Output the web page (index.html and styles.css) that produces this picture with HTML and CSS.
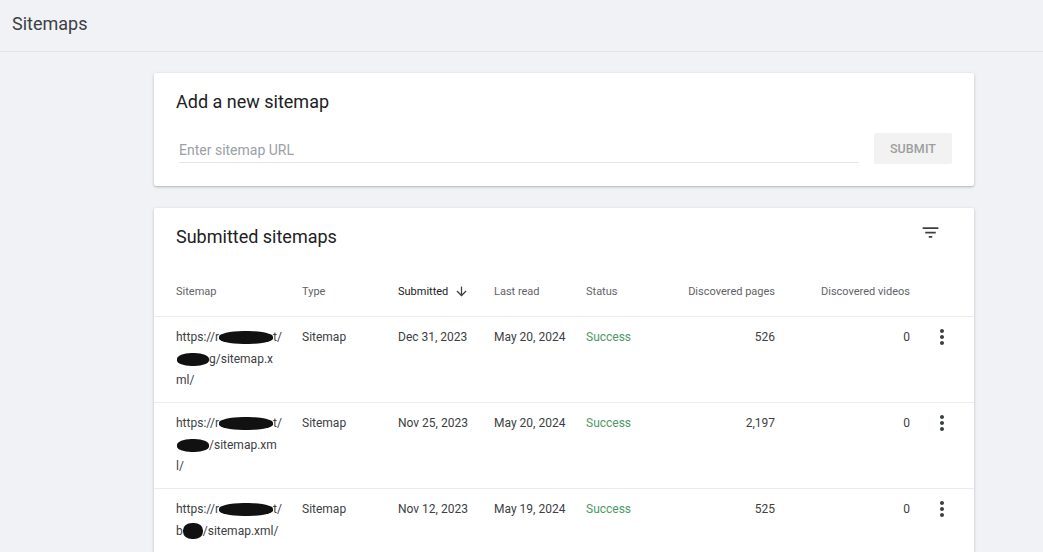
FILE: index.html
```html
<!DOCTYPE html>
<html lang="en">
<head>
<meta charset="utf-8">
<title>Sitemaps</title>
<link rel="stylesheet" href="styles.css">
</head>
<body>
<header class="topbar">
  <h1 class="page-title">Sitemaps</h1>
</header>
<main class="content">
  <section class="card add-card">
    <h2 class="card-title">Add a new sitemap</h2>
    <div class="add-row">
      <div class="url-field"><span class="placeholder">Enter sitemap URL</span></div>
      <button class="submit-btn" type="button">SUBMIT</button>
    </div>
  </section>

  <section class="card list-card">
    <div class="list-head">
      <h2 class="card-title">Submitted sitemaps</h2>
      <svg class="filter-icon" viewBox="0 0 24 24" width="21" height="21"><path d="M10 18h4v-2h-4v2zM3 6v2h18V6H3zm3 7h12v-2H6v2z"/></svg>
    </div>
    <div class="grid-row head-row">
      <div class="th">Sitemap</div>
      <div class="th">Type</div>
      <div class="th th-active">Submitted <svg class="sort-icon" viewBox="0 0 24 24" width="15" height="15"><path d="M20 12l-1.41-1.41L13 16.17V4h-2v12.170l-5.58-5.59L4 12l8 8 8-8z"/></svg></div>
      <div class="th">Last read</div>
      <div class="th">Status</div>
      <div class="th num">Discovered pages</div>
      <div class="th num">Discovered videos</div>
      <div class="th"></div>
    </div>

    <div class="grid-row data-row">
      <div class="td url"><span class="ln">https://r<span class="blob b1"></span>t/</span><span class="ln"><span class="blob b2"></span>g/sitemap.x</span><span class="ln">ml/</span></div>
      <div class="td">Sitemap</div>
      <div class="td">Dec 31, 2023</div>
      <div class="td">May 20, 2024</div>
      <div class="td ok">Success</div>
      <div class="td num">526</div>
      <div class="td num">0</div>
      <div class="td menu"><svg viewBox="0 0 24 24" width="24" height="24"><path d="M12 8c1.1 0 2-.9 2-2s-.9-2-2-2-2 .9-2 2 .9 2 2 2zm0 2c-1.1 0-2 .9-2 2s.9 2 2 2 2-.9 2-2-.9-2-2-2zm0 6c-1.1 0-2 .9-2 2s.9 2 2 2 2-.9 2-2-.9-2-2-2z"/></svg></div>
    </div>

    <div class="grid-row data-row">
      <div class="td url"><span class="ln">https://r<span class="blob b1"></span>t/</span><span class="ln"><span class="blob b3"></span>/sitemap.xm</span><span class="ln">l/</span></div>
      <div class="td">Sitemap</div>
      <div class="td">Nov 25, 2023</div>
      <div class="td">May 20, 2024</div>
      <div class="td ok">Success</div>
      <div class="td num">2,197</div>
      <div class="td num">0</div>
      <div class="td menu"><svg viewBox="0 0 24 24" width="24" height="24"><path d="M12 8c1.1 0 2-.9 2-2s-.9-2-2-2-2 .9-2 2 .9 2 2 2zm0 2c-1.1 0-2 .9-2 2s.9 2 2 2 2-.9 2-2-.9-2-2-2zm0 6c-1.1 0-2 .9-2 2s.9 2 2 2 2-.9 2-2-.9-2-2-2z"/></svg></div>
    </div>

    <div class="grid-row data-row">
      <div class="td url"><span class="ln">https://r<span class="blob b1"></span>t/</span><span class="ln">b<span class="blob b4"></span>/sitemap.xml/</span></div>
      <div class="td">Sitemap</div>
      <div class="td">Nov 12, 2023</div>
      <div class="td">May 19, 2024</div>
      <div class="td ok">Success</div>
      <div class="td num">525</div>
      <div class="td num">0</div>
      <div class="td menu"><svg viewBox="0 0 24 24" width="24" height="24"><path d="M12 8c1.1 0 2-.9 2-2s-.9-2-2-2-2 .9-2 2 .9 2 2 2zm0 2c-1.1 0-2 .9-2 2s.9 2 2 2 2-.9 2-2-.9-2-2-2zm0 6c-1.1 0-2 .9-2 2s.9 2 2 2 2-.9 2-2-.9-2-2-2z"/></svg></div>
    </div>
  </section>
</main>
</body>
</html>
```

FILE: styles.css
```css
* { box-sizing: border-box; }
html, body { margin: 0; padding: 0; }
body {
  background: #f1f2f6;
  font-family: Roboto, "Liberation Sans", Arial, sans-serif;
  color: #202124;
  overflow: hidden;
  height: 552px;
}
.topbar {
  height: 52px;
  border-bottom: 1px solid #e3e4e8;
  padding: 0 12px;
  display: flex;
  align-items: center;
}
.page-title {
  margin: 0;
  font-size: 18px;
  font-weight: 400;
  color: #3c4043;
  line-height: 24px;
  position: relative;
  top: -2px;
}
.content {
  padding: 21px 0 0 154px;
  width: 974px;
  display: flex;
  flex-direction: column;
  gap: 22px;
}
.card {
  background: #fff;
  border-radius: 2px;
  box-shadow: 0 1px 2px rgba(60,64,67,.25), 0 1px 4px rgba(60,64,67,.12);
}
.card-title {
  margin: 0;
  font-size: 18px;
  font-weight: 400;
  line-height: 24px;
  color: #202124;
}
.add-card {
  height: 113px;
  padding: 17px 22px 0 22px;
}
.add-row {
  margin-top: 19px;
  display: flex;
  align-items: flex-start;
  gap: 15px;
}
.url-field {
  flex: 1;
  margin-left: 3px;
  padding-top: 7px;
  height: 30px;
  border-bottom: 1px solid #e4e4e4;
  font-size: 14px;
  line-height: 20px;
}
.placeholder { color: #9aa0a6; }
.submit-btn {
  width: 78px;
  height: 31px;
  border: 0;
  border-radius: 2px;
  background: #f2f2f2;
  color: #9e9e9e;
  font-family: Roboto, "Liberation Sans", Arial, sans-serif;
  font-size: 12.5px;
  font-weight: 500;
  letter-spacing: 0.1px;
  padding: 0;
  margin-top: 0;
}
.list-card {
  padding-top: 17px;
}
.list-head {
  display: flex;
  justify-content: space-between;
  align-items: flex-start;
  padding: 0 33px 0 22px;
}
.filter-icon {
  fill: #3c4043;
  margin-top: -3px;
}
.grid-row {
  display: grid;
  grid-template-columns: 126px 96px 96px 92px 104px 85px 135px 64px;
  padding-left: 22px;
  border-bottom: 1px solid #ececec;
}
.head-row {
  margin-top: 17px;
  height: 51px;
  align-items: center;
}
.th {
  font-size: 11px;
  color: #5f6368;
  display: flex;
  align-items: center;
  gap: 6px;
  padding-top: 1px;
  white-space: nowrap;
}
.th.num { justify-content: flex-end; }
.th-active { color: #202124; }
.sort-icon { fill: #3c4043; }
.data-row {
  min-height: 86px;
  padding-top: 10px;
  padding-bottom: 10px;
}
.td {
  font-size: 12px;
  line-height: 21.5px;
  color: #3c4043;
}
.td.num { text-align: right; }
.td.ok { color: #4d9a64; }
.url { display: flex; flex-direction: column; }
.ln { white-space: nowrap; display: flex; align-items: center; }
.blob {
  display: inline-block;
  background: #111;
  border-radius: 45%;
  filter: blur(0.6px);
}
.b1 { width: 54px; height: 13px; }
.b2 { width: 32px; height: 13px; margin-left: 1px; }
.b3 { width: 32px; height: 13px; margin-left: 1px; }
.b4 { width: 20px; height: 16px; }
.menu {
  display: flex;
  justify-content: center;
  align-items: flex-start;
  margin-top: -2px;
}
.menu svg { fill: #3c4043; }
```
